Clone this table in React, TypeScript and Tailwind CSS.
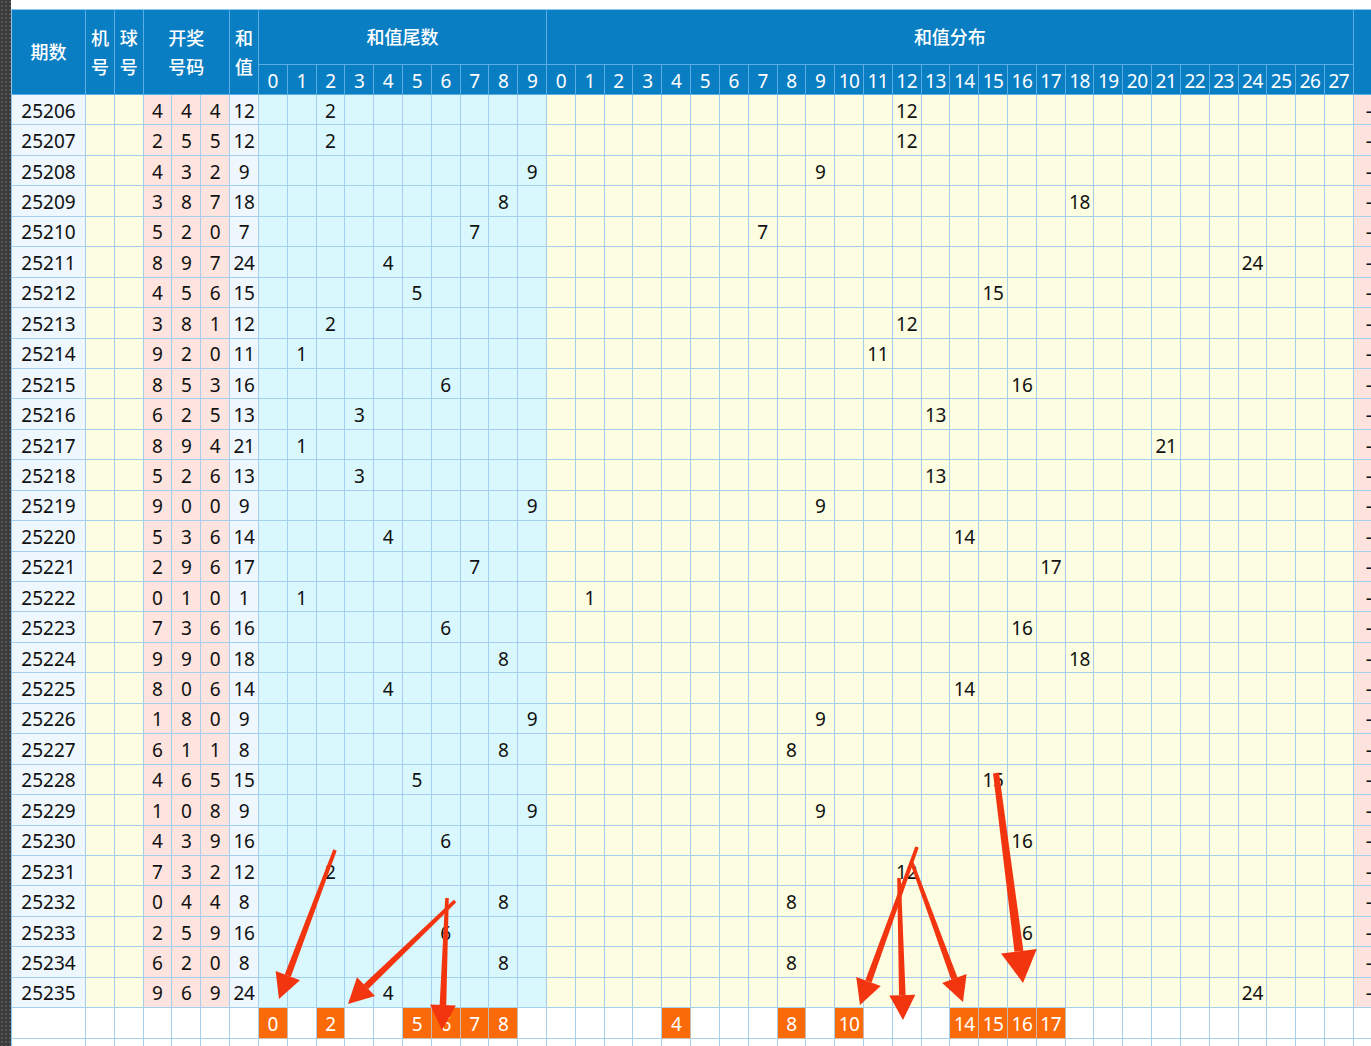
import React from "react";

// 期号, 开奖号码
const draws: [string, number, number, number][] = [
  ["25206", 4, 4, 4],
  ["25207", 2, 5, 5],
  ["25208", 4, 3, 2],
  ["25209", 3, 8, 7],
  ["25210", 5, 2, 0],
  ["25211", 8, 9, 7],
  ["25212", 4, 5, 6],
  ["25213", 3, 8, 1],
  ["25214", 9, 2, 0],
  ["25215", 8, 5, 3],
  ["25216", 6, 2, 5],
  ["25217", 8, 9, 4],
  ["25218", 5, 2, 6],
  ["25219", 9, 0, 0],
  ["25220", 5, 3, 6],
  ["25221", 2, 9, 6],
  ["25222", 0, 1, 0],
  ["25223", 7, 3, 6],
  ["25224", 9, 9, 0],
  ["25225", 8, 0, 6],
  ["25226", 1, 8, 0],
  ["25227", 6, 1, 1],
  ["25228", 4, 6, 5],
  ["25229", 1, 0, 8],
  ["25230", 4, 3, 9],
  ["25231", 7, 3, 2],
  ["25232", 0, 4, 4],
  ["25233", 2, 5, 9],
  ["25234", 6, 2, 0],
  ["25235", 9, 6, 9],
];

const tailPicks = [0, 2, 5, 6, 7, 8];
const sumPicks = [4, 8, 10, 14, 15, 16, 17];

// tail x, tail y, tip x, tip y, big
const arrows: [number, number, number, number, boolean][] = [
  [335, 850, 279, 999, false],
  [455, 901, 348, 1004, false],
  [447, 898, 442, 1030, false],
  [917, 847, 860, 1005, false],
  [899, 878, 903, 1020, false],
  [912, 863, 963, 1002, false],
  [996, 773, 1023, 983, true],
];

function bgFor(i: number) {
  if (i === 0 || i === 6) return "bg-[#eef7fe]";
  if (i <= 2) return "bg-[#fcfde1]";
  if (i <= 5) return "bg-[#fde4de]";
  if (i <= 16) return "bg-[#d9f8fd]";
  if (i <= 44) return "bg-[#fcfde1]";
  return "bg-[#fde3de]";
}

const cell = "flex items-center justify-center pt-[3px] border-r border-b border-[#a6cfee] leading-none";
const head = "flex items-center justify-center border-r border-b border-[#5aaee4] bg-[#0a7ec2] text-white leading-none";

function Arrow({ a }: { a: [number, number, number, number, boolean] }) {
  const [x1, y1, x2, y2, big] = a;
  const L = big ? 32 : 25;
  const W = big ? 18 : 13;
  const s0 = big ? 3 : 1.8;
  const s1 = big ? 4.5 : 3.3;
  const len = Math.hypot(x2 - x1, y2 - y1);
  const ux = (x2 - x1) / len;
  const uy = (y2 - y1) / len;
  const nx = -uy;
  const ny = ux;
  const bx = x2 - ux * L;
  const by = y2 - uy * L;
  const shaft = [
    [x1 + nx * s0, y1 + ny * s0],
    [bx + nx * s1, by + ny * s1],
    [bx - nx * s1, by - ny * s1],
    [x1 - nx * s0, y1 - ny * s0],
  ];
  const headPts = [
    [x2, y2],
    [bx + nx * W, by + ny * W],
    [bx - nx * W, by - ny * W],
  ];
  const p = (pts: number[][]) => pts.map((q) => q.join(",")).join(" ");
  return (
    <g fill="#f2340f">
      <polygon points={p(shaft)} />
      <polygon points={p(headPts)} />
    </g>
  );
}

export default function App() {
  return (
    <div className="relative w-[1371px] h-[1046px] overflow-hidden bg-white flex font-['Noto_Sans','Noto_Sans_CJK_SC',sans-serif] text-[19px] text-[#111]">
      {/* left dark strip */}
      <div className="w-[11px] h-full shrink-0 bg-[#3b3b3b] bg-[radial-gradient(#565656_1px,transparent_1px)] bg-[size:4px_4px]" />

      <div className="flex-1 flex flex-col min-w-0">
        <div className="h-[9px] shrink-0 bg-white" />
        <div className="grid grid-cols-[74px_repeat(44,28.82px)_40px] grid-rows-[55px_30px_repeat(31,30.45px)_30px] border-t border-l border-[#8cc6ee] w-max">
          {/* header */}
          <div className={`${head} row-span-2 text-[18px] font-medium`}>期数</div>
          <div className={`${head} row-span-2 flex-col gap-[11px] text-[18px] font-medium`}>
            <span>机</span>
            <span>号</span>
          </div>
          <div className={`${head} row-span-2 flex-col gap-[11px] text-[18px] font-medium`}>
            <span>球</span>
            <span>号</span>
          </div>
          <div className={`${head} col-span-3 row-span-2 flex-col gap-[11px] text-[18px] font-medium`}>
            <span>开奖</span>
            <span>号码</span>
          </div>
          <div className={`${head} row-span-2 flex-col gap-[11px] text-[18px] font-medium`}>
            <span>和</span>
            <span>值</span>
          </div>
          <div className={`${head} col-span-10 text-[18px] font-medium`}>和值尾数</div>
          <div className={`${head} col-span-28 text-[18px] font-medium`}>和值分布</div>
          <div className={`${head} row-span-2`} />
          {Array.from({ length: 10 }, (_, i) => (
            <div key={"t" + i} className={`${head} pt-[3px] tracking-[-0.5px]`}>
              {i}
            </div>
          ))}
          {Array.from({ length: 28 }, (_, i) => (
            <div key={"s" + i} className={`${head} pt-[3px] tracking-[-0.5px]`}>
              {i}
            </div>
          ))}

          {/* data rows */}
          {draws.map(([period, a, b, c]) => {
            const sum = a + b + c;
            const tail = sum % 10;
            return Array.from({ length: 46 }, (_, i) => {
              let text: React.ReactNode = "";
              if (i === 0) text = period;
              else if (i >= 3 && i <= 5) text = [a, b, c][i - 3];
              else if (i === 6) text = sum;
              else if (i >= 7 && i <= 16 && i - 7 === tail) text = tail;
              else if (i >= 17 && i <= 44 && i - 17 === sum) text = sum;
              else if (i === 45) text = "-";
              return (
                <div
                  key={period + "-" + i}
                  className={`${cell} ${bgFor(i)} ${i === 45 ? "justify-start pl-[12px]" : ""} ${i > 5 ? "tracking-[-0.3px]" : ""}`}
                >
                  {text}
                </div>
              );
            });
          })}

          {/* pick row */}
          {Array.from({ length: 46 }, (_, i) => {
            const isTail = i >= 7 && i <= 16 && tailPicks.includes(i - 7);
            const isSum = i >= 17 && i <= 44 && sumPicks.includes(i - 17);
            if (isTail || isSum) {
              return (
                <div
                  key={"p" + i}
                  className="flex items-center justify-center pt-[3px] border-r border-b border-[#c9b9ae] bg-[#fb6a09] text-white leading-none tracking-[-0.5px]"
                >
                  {isTail ? i - 7 : i - 17}
                </div>
              );
            }
            return <div key={"p" + i} className={`${cell} bg-white`} />;
          })}

          {/* trailing empty row */}
          {Array.from({ length: 46 }, (_, i) => (
            <div key={"e" + i} className={`${cell} bg-white`} />
          ))}
        </div>
      </div>

      <svg className="absolute inset-0 pointer-events-none" width="1371" height="1046" viewBox="0 0 1371 1046">
        {arrows.map((a, i) => (
          <Arrow key={i} a={a} />
        ))}
      </svg>
    </div>
  );
}
